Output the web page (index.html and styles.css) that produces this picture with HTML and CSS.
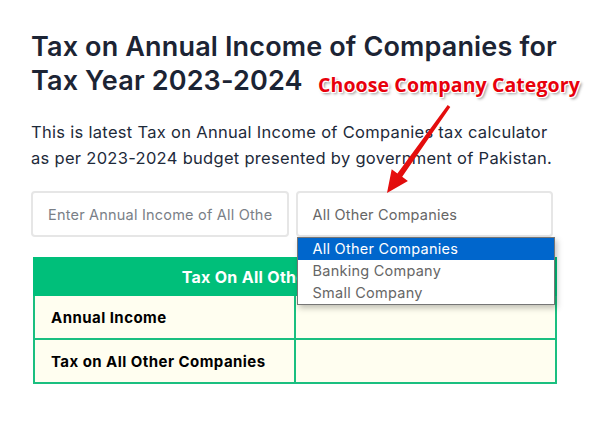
FILE: index.html
```html
<!DOCTYPE html>
<html>
<head>
<meta charset="utf-8">
<link rel="stylesheet" href="styles.css">
</head>
<body>
<main class="page">
  <h1 class="title">Tax on Annual Income of Companies for Tax Year 2023-2024</h1>
  <p class="intro">This is latest Tax on Annual Income of Companies tax calculator as per 2023-2024 budget presented by government of Pakistan.</p>
  <div class="form-row">
    <div class="field input-field"><span class="placeholder">Enter Annual Income of All Other Companies</span></div>
    <div class="field select-field">
      <span class="select-value">All Other Companies</span>
      <ul class="dropdown">
        <li class="option selected">All Other Companies</li>
        <li class="option">Banking Company</li>
        <li class="option">Small Company</li>
      </ul>
    </div>
  </div>
  <table class="result">
    <thead>
      <tr><th colspan="2">Tax On All Other Companies</th></tr>
    </thead>
    <tbody>
      <tr><td class="label">Annual Income</td><td></td></tr>
      <tr><td class="label">Tax on All Other Companies</td><td></td></tr>
    </tbody>
  </table>
  <div class="callout">Choose Company Category</div>
  <svg class="arrow" width="600" height="432" viewBox="0 0 600 432">
    <defs>
      <linearGradient id="ag" x1="0" y1="0" x2="1" y2="1">
        <stop offset="0" stop-color="#ff1a1a"/>
        <stop offset="1" stop-color="#c80000"/>
      </linearGradient>
    </defs>
    <polygon points="450.3,106.9 447.7,105.1 397.4,173.4 391.7,169.3 387,193 407.9,180.9 402.2,176.8" fill="url(#ag)"/>
  </svg>
</main>
</body>
</html>
```
FILE: styles.css
```css
html, body { margin: 0; padding: 0; background: #fff; }
body { font-family: "Inter", "Open Sans", sans-serif; }
.page { position: relative; width: 600px; height: 432px; padding: 30px 43px 0 31px; box-sizing: border-box; }
.title { margin: 0; font-size: 27px; line-height: 34px; font-weight: 600; color: #1c2434; width: 545px; letter-spacing: 0.15px; }
.intro { margin: 21px 0 0; font-size: 16.5px; line-height: 26px; color: #1d2a3a; width: 525px; letter-spacing: 0.3px; }
.form-row { display: flex; gap: 7px; margin-top: 20px; width: 522px; }
.field { flex: 1; height: 46px; box-sizing: border-box; border: 2px solid #e6e6e6; border-radius: 4px; display: flex; align-items: center; overflow: hidden; white-space: nowrap; font-size: 14.5px; letter-spacing: 0.2px; }
.input-field { padding: 0 15px; color: #7a7f87; }
.placeholder { overflow: hidden; }
.select-field { position: relative; overflow: visible; padding: 0 15px; color: #666; }
.dropdown { position: absolute; left: -1px; top: 44px; width: 258px; margin: 0; padding: 0; list-style: none; background: #fff; border: 1px solid #767676; box-shadow: 2px 3px 6px rgba(0,0,0,0.25); z-index: 3; box-sizing: border-box; }
.option { height: 22px; line-height: 22px; padding: 0 15px; font-size: 14.5px; letter-spacing: 0.25px; color: #666; }
.option.selected { background: #0066cc; color: #fff; }
.result { margin-top: 20px; width: 524px; border-collapse: collapse; margin-left: 2px; }
.result th { background: #00bf7a; color: #fff; height: 35px; font-size: 16px; letter-spacing: 0.3px; font-weight: 700; border: 2px solid #00bf7a; padding: 0; }
.result td { background: #fffef0; border: 2px solid #1abf80; height: 42px; padding: 0 16px; width: 50%; font-size: 15px; letter-spacing: 0.45px; color: #000; }
.result .label { font-weight: 700; }
.callout { position: absolute; left: 318px; top: 71px; font-family: "Open Sans", sans-serif; font-weight: 700; font-size: 19.5px; color: #e8000b; letter-spacing: 0.1px; text-shadow: 1px 0 0 #fff, -1px 0 0 #fff, 0 1px 0 #fff, 0 -1px 0 #fff, 1px 1px 0 #fff, -1px -1px 0 #fff, 1px -1px 0 #fff, -1px 1px 0 #fff, 2px 2px 3px rgba(0,0,0,0.45); }
.arrow { position: absolute; left: 0; top: 0; pointer-events: none; z-index: 2; }
```
